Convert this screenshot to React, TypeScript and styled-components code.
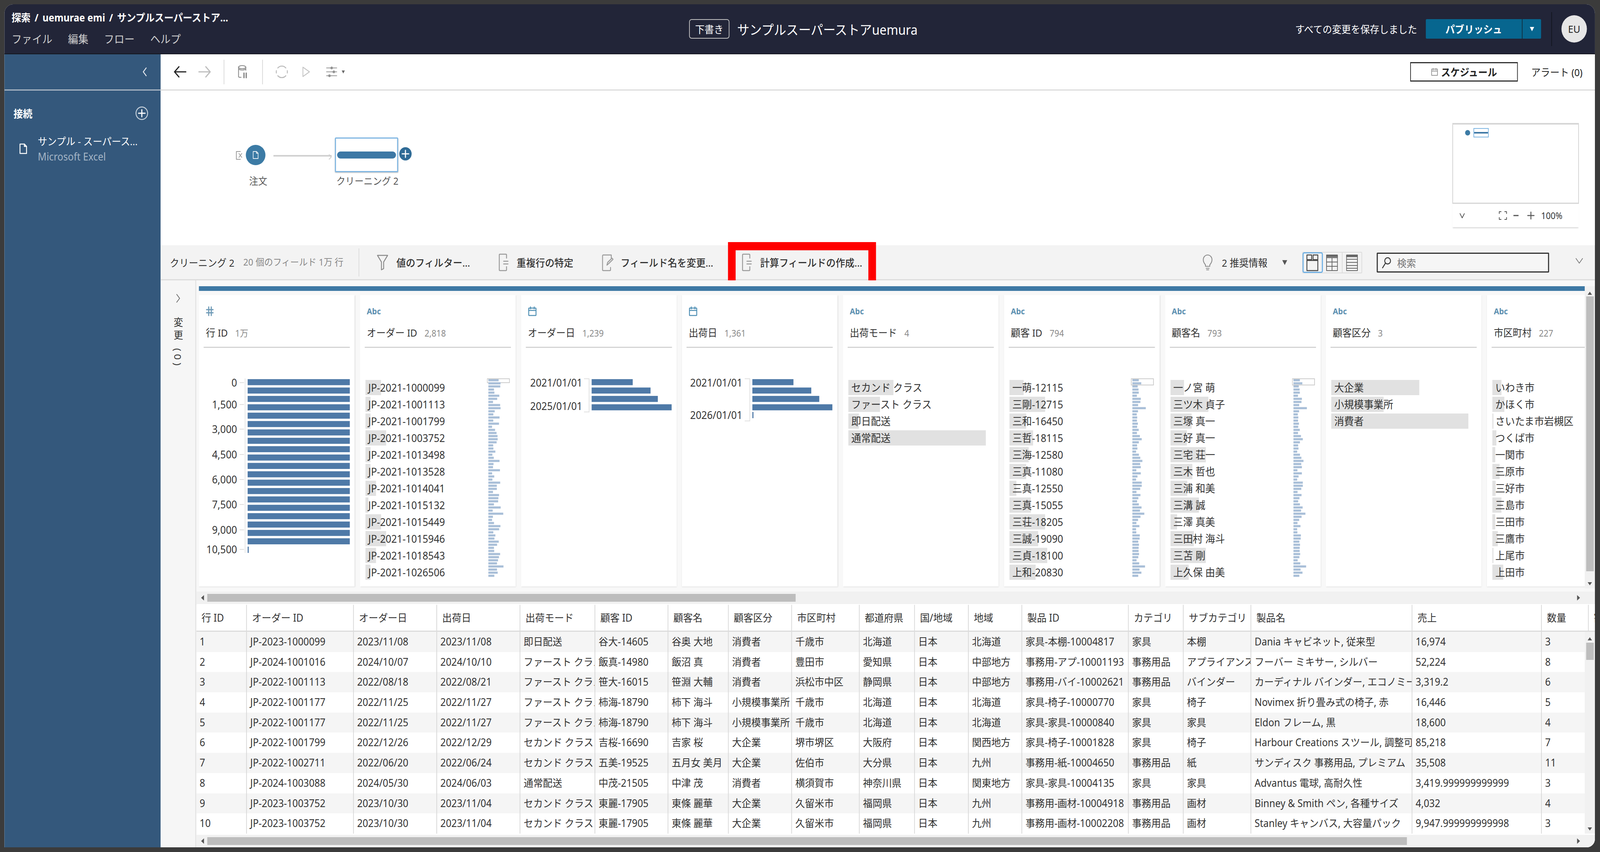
import React, { useState } from "react";
import styled, { createGlobalStyle } from "styled-components";

const Global = createGlobalStyle`
  html, body { margin: 0; padding: 0; width: 100%; height: 2182px; overflow: hidden; background: #3b3b3b; }
  #root { width: 100%; height: 100%; overflow: hidden; }
  * { box-sizing: border-box; }
  body { font-family: "Noto Sans", "Noto Sans CJK JP", sans-serif; color: #333; }
`;

/* The browser window can be narrower than the 4400px design, so the page is fitted to it. */
const Page = styled.div`
  width: 4400px; height: 2182px; padding: 11px 14px 12px 12px; background: #3b3b3b; transform-origin: 0 0;
`;
const Win = styled.div`
  width: 100%; height: 100%; display: flex; flex-direction: column; overflow: hidden;
  border-radius: 24px 24px 22px 0; background: #fff; position: relative;
`;

/* ---------- top bar ---------- */
const TopBar = styled.header`
  height: 128px; flex: none; display: flex; align-items: center; background: #222538;
  border-bottom: 2px solid #14161f; padding-right: 22px;
`;
const TopLeft = styled.div`
  width: 1883px; flex: none; padding-left: 20px; display: flex; flex-direction: column; gap: 23px; margin-top: -2px;
`;
const Crumbs = styled.div`
  display: flex; gap: 11px; font-size: 26px; line-height: 30px; font-weight: 700; color: #fff; white-space: nowrap;
`;
const Menu = styled.nav`
  display: flex; gap: 43px; font-size: 28px; line-height: 34px; color: #cfcfcf;
`;
const Draft = styled.span`
  width: 111px; height: 50px; display: flex; align-items: center; justify-content: center;
  border: 2px solid #c0c0c0; border-radius: 7px; color: #fff; font-size: 26px;
`;
const Title = styled.div`
  margin-left: 21px; font-size: 34px; color: #fff; white-space: nowrap;
`;
const TopRight = styled.div`
  margin-left: auto; display: flex; align-items: center; height: 100%;
`;
const Saved = styled.span`
  font-size: 26px; color: #fff; white-space: nowrap;
`;
const Publish = styled.div`
  margin-left: 24px; display: flex; height: 50px; width: 317px; background: #07668f; border-radius: 3px; color: #fff;
`;
const PublishLabel = styled.span`
  flex: 1; display: flex; align-items: center; justify-content: center; font-size: 26px; font-weight: 700;
`;
const PublishCaret = styled.span`
  width: 53px; display: flex; align-items: center; justify-content: center; border-left: 2px solid #13303f;
`;
const TopRule = styled.span`
  width: 2px; height: 87px; background: #14161f; margin: 0 26px 0 28px;
`;
const Avatar = styled.span`
  width: 70px; height: 70px; border-radius: 50%; background: #e6e6e6; color: #222; display: flex; align-items: center;
  justify-content: center; font-size: 26px;
`;

/* ---------- body ---------- */
const Body = styled.div`
  flex: 1; display: flex; min-height: 0;
`;
const Side = styled.aside`
  width: 430px; flex: none; background: #34587c; color: #fff; display: flex; flex-direction: column;
`;
const SideTop = styled.div`
  height: 93px; flex: none; display: flex; align-items: center; justify-content: flex-end; padding-right: 36px;
  border-bottom: 3px solid #a9b6c4;
`;
const SideHead = styled.div`
  display: flex; align-items: center; justify-content: space-between; padding: 0 34px 0 25px; height: 40px; margin-top: 38px;
  font-size: 26px; font-weight: 700;
`;
const SideItem = styled.div`
  display: flex; align-items: center; gap: 28px; padding-left: 40px; margin-top: 36px;
`;
const SideText = styled.div`
  display: flex; flex-direction: column; gap: 8px;
`;
const SideName = styled.span`
  font-size: 26px; line-height: 32px; white-space: nowrap;
`;
const SideSub = styled.span`
  font-size: 26.5px; line-height: 30px; color: #a5b6c7;
`;

const Main = styled.main`
  flex: 1; min-width: 0; display: flex; flex-direction: column; background: #fff;
`;
const Toolbar = styled.div`
  height: 93px; flex: none; display: flex; align-items: center; padding-left: 35px; padding-right: 34px;
  border-bottom: 3px solid #dcdcdc;
`;
const Tool = styled.span<{ $ml?: number }>`
  display: inline-flex; align-items: center; margin-left: ${(p) => p.$ml ?? 0}px;
`;
const ToolRule = styled.span<{ $ml: number }>`
  width: 2px; height: 63px; background: #d8d8d8; margin-left: ${(p) => p.$ml}px;
`;
const ScheduleBtn = styled.div`
  margin-left: auto; width: 296px; height: 50px; border: 2px solid #333; border-bottom-width: 3px; border-top-width: 3px;
  display: flex; align-items: center; justify-content: center; gap: 8px; font-size: 26px; font-weight: 700; color: #222;
`;
const Alert = styled.span`
  margin-left: 37px; font-size: 26px; color: #222; white-space: nowrap;
`;

const FlowArea = styled.section`
  height: 396px; flex: none; position: relative; background: #fff;
`;
const FlowNode = styled.div<{ $x: number; $y: number }>`
  position: absolute; left: ${(p) => p.$x}px; top: ${(p) => p.$y}px;
`;
const Circle = styled.div`
  width: 54px; height: 52px; border-radius: 50%; background: #3c7ba5; display: flex; align-items: center; justify-content: center;
`;
const StepCard = styled.div`
  width: 174px; height: 89px; border: 3px solid #7fb6e2; border-radius: 3px; background: #fff; display: flex; align-items: center; padding: 0 3px;
  box-shadow: 0 2px 2px #ccc;
`;
const StepBar = styled.div`
  height: 18px; flex: 1; background: #3d78a5; border-radius: 9px;
`;
const FlowLabel = styled.div`
  font-size: 25px; color: #555; white-space: nowrap;
`;
const Link = styled.div`
  width: 160px; height: 4px; background: #d0d0d0;
`;
const Minimap = styled.div`
  position: absolute; right: 44px; top: 83px; width: 348px; height: 267px; background: #fff; display: flex; flex-direction: column;
  box-shadow: 0 3px 3px -1px #ccc;
`;
const MapView = styled.div`
  height: 207px; flex: none; border: 2px solid #d6d6d6; border-top-width: 4px; border-bottom-width: 3px; padding: 9px 0 0 33px; display: flex; gap: 9px; align-items: flex-start;
`;
const MapDot = styled.span`
  width: 14px; height: 14px; border-radius: 50%; background: #3c7ba5; margin-top: 5px;
`;
const MapStep = styled.span`
  width: 42px; height: 24px; border: 2px solid #7fb6e2; display: flex; align-items: center;
`;
const MapBar = styled.span`
  flex: 1; height: 4px; background: #3d78a5;
`;
const MapCtl = styled.div`
  flex: 1; display: flex; align-items: center; padding: 0 12px 0 20px; color: #333; font-size: 23px;
`;

/* ---------- profile bar ---------- */
const ProfileBar = styled.div`
  height: 90px; flex: none; background: #f3f3f3; border-bottom: 3px solid #dcdcdc; display: flex; align-items: center; padding-left: 25px;
  position: relative;
`;
const StepName = styled.span`
  font-size: 26px; color: #333; white-space: nowrap; width: 202px; flex: none;
`;
const StepMeta = styled.span`
  font-size: 24px; color: #888; white-space: nowrap; width: 317px; flex: none; margin-top: -5px;
`;
const BarRule = styled.span`
  width: 2px; height: 72px; background: #dcdcdc; flex: none;
`;
const Action = styled.div<{ $ml: number; $gap: number }>`
  display: flex; align-items: center; gap: ${(p) => p.$gap}px; margin-left: ${(p) => p.$ml}px; flex: none;
  font-size: 26px; font-weight: 500; color: #333; white-space: nowrap;
`;
const RedBox = styled.div`
  position: absolute; left: 1560px; top: -8px; width: 407px; height: 121px; border: 21px solid #f00; pointer-events: none;
`;
const Hint = styled.div`
  position: absolute; left: 2865px; top: 0; height: 88px; display: flex; align-items: center; gap: 25px; font-size: 26px; color: #333;
`;
const Views = styled.div`
  position: absolute; left: 3139px; top: 17px; display: flex; height: 55px; border: 2px solid #dcdcdc; border-radius: 3px; width: 165px;
`;
const ViewBtn = styled.span<{ $on?: boolean }>`
  flex: 1; display: flex; align-items: center; justify-content: center;
  ${(p) => (p.$on ? "outline: 3px solid #6fb0e4; outline-offset: -2px; border-radius: 4px;" : "")}
  &:not(:last-child) { border-right: 2px solid #dcdcdc; }
`;
const Search = styled.div`
  position: absolute; left: 3344px; top: 19px; width: 474px; height: 51px; border: 3px solid #333; border-radius: 2px; background: #f6f6f6;
  display: flex; align-items: center; gap: 16px; padding-left: 11px; font-size: 26px; color: #777;
`;
const Collapse = styled.span`
  position: absolute; left: 3890px; top: 30px; display: flex;
`;

/* ---------- workspace ---------- */
const Workspace = styled.div`
  flex: 1; min-height: 0; display: flex;
`;
const Changes = styled.div`
  width: 98px; flex: none; background: #f6f6f6; border-right: 3px solid #e2e2e2; display: flex; flex-direction: column; align-items: center; padding-top: 34px;
`;
const ChangesText = styled.div`
  writing-mode: vertical-rl; font-size: 26px; color: #333; letter-spacing: 7px; margin-top: 36px; white-space: nowrap;
`;
const Content = styled.div`
  flex: 1; min-width: 0; display: flex; flex-direction: column;
`;
const Profile = styled.div`
  height: 829px; flex: none; background: #f8f8f8; position: relative; overflow: hidden; padding: 15px 0 0 7px;
`;
const ProgressBar = styled.div`
  width: 3834px; height: 12px; background: #3d78a4;
`;
const Cards = styled.div`
  display: flex; gap: 14.75px; margin-top: 11px; width: 3811px; overflow: hidden; padding-bottom: 4px;
`;
const Card = styled.article`
  width: 428px; height: 746px; flex: none; background: #fff; box-shadow: 1px 1px 3px #d8d8d8;
`;
const CardHead = styled.div`
  height: 135px; margin: 0 13px; border-bottom: 3px solid #d4d4d4; position: relative;
`;
const TypeSlot = styled.div`
  position: absolute; left: 6px; top: 28px; height: 26px; display: flex; align-items: center;
`;
const Abc = styled.span`
  font-size: 21px; font-weight: 700; color: #5b8fb0; line-height: 26px;
`;
const CardTitle = styled.div`
  position: absolute; left: 6px; top: 76px; display: flex; align-items: baseline; gap: 20px; white-space: nowrap;
`;
const FieldName = styled.span`
  font-size: 26px; color: #333;
`;
const FieldCount = styled.span`
  font-size: 23px; color: #8a8a8a;
`;
const ChartArea = styled.div`
  display: flex; justify-content: space-between; padding: 82px 15px 0 15px;
`;
const List = styled.ul`
  list-style: none; margin: 0; padding: 0; display: flex; flex-direction: column; gap: 4px; flex: 1;
`;
const ListRow = styled.li`
  height: 39px; padding-left: 8px; font-size: 27px; line-height: 39px; color: #333; white-space: nowrap;
  background-image: linear-gradient(#e1e1e1, #e1e1e1); background-repeat: no-repeat;
`;
const Mini = styled.svg`
  flex: none; margin-top: -4px;
`;
const HistSvg = styled.svg`
  display: block; font-size: 27px; fill: #333;
`;

const HScrollTrack = styled.div`
  position: absolute; left: 0; bottom: 0; right: 0; height: 32px; background: #f1f1f1; display: flex; align-items: center; padding-right: 41px;
`;
const ArrowL = styled.span`
  width: 0; height: 0; border: 7px solid transparent; border-left: 0; border-right: 8px solid #555; margin: 0 9px 0 13px;
`;
const ArrowR = styled.span`
  width: 0; height: 0; border: 7px solid transparent; border-right: 0; border-left: 8px solid #555; margin-left: auto;
`;
const Thumb = styled.span<{ $w: number }>`
  width: ${(p) => p.$w}px; height: 20px; background: #bdbdbd;
`;
const VScroll = styled.div<{ $top: number; $bottom: number }>`
  position: absolute; right: 0; top: ${(p) => p.$top}px; bottom: ${(p) => p.$bottom}px; width: 28px; background: #f1f1f1;
  display: flex; flex-direction: column; align-items: center; padding: 14px 0 8px;
`;
const ArrowU = styled.span`
  width: 0; height: 0; border: 6px solid transparent; border-top: 0; border-bottom: 8px solid #555;
`;
const ArrowD = styled.span`
  width: 0; height: 0; border: 6px solid transparent; border-bottom: 0; border-top: 8px solid #555; margin-top: auto;
`;
const VThumb = styled.span<{ $mt: number; $h: number }>`
  width: 21px; height: ${(p) => p.$h}px; background: #bdbdbd; margin-top: ${(p) => p.$mt}px;
`;

/* ---------- table ---------- */
const TableWrap = styled.div`
  flex: 1; min-height: 0; position: relative; overflow: hidden; background: #fff; margin-top: 2px;
`;
const COLS = [139, 294, 229, 229, 206, 201, 166, 174, 186, 152, 148, 147, 293, 151, 186, 443, 356, 129, 160];
const Row = styled.div<{ $alt?: boolean }>`
  display: grid; grid-template-columns: ${COLS.map((c) => c + "px").join(" ")}; height: 51.7px;
  background: ${(p) => (p.$alt ? "#f5f5f5" : "#fff")};
`;
const HeadRow = styled(Row)`
  height: 69px; border-bottom: 3px solid #dcdcdc; background: #fff;
`;
const HeadCell = styled.div`
  padding-left: 14px; line-height: 66px; font-size: 26.5px; color: #333; border-right: 2px solid #d8d8d8; white-space: nowrap; overflow: hidden;
`;
const Cell = styled.div`
  padding-left: 9px; line-height: 51px; font-size: 26.5px; color: #333; border-right: 2px solid #d8d8d8; white-space: nowrap; overflow: hidden;
`;

/* ---------- data ---------- */
const ID = ["JP-2021-1000099","JP-2021-1001113","JP-2021-1001799","JP-2021-1003752","JP-2021-1013498","JP-2021-1013528","JP-2021-1014041","JP-2021-1015132","JP-2021-1015449","JP-2021-1015946","JP-2021-1018543","JP-2021-1026506"];
const IDW = [43,14,14,57,14,14,29,8,43,57,29,14];
const CID = ["一萌-12115","三剛-12715","三和-16450","三哲-18115","三海-12580","三真-11080","三真-12550","三真-15055","三荘-18205","三誠-19090","三貞-18100","上和-20830"];
const CIDW = [39,98,46,65,53,46,19,59,98,79,104,72];
const NAME = ["一ノ宮 萌","三ツ木 貞子","三塚 真一","三好 真一","三宅 荘一","三木 哲也","三浦 和美","三溝 誠","三澤 真美","三田村 海斗","三苫 剛","上久保 由美"];
const NAMEW = [37,104,58,45,97,60,46,78,18,64,97,50];
const CITY = ["いわき市","かほく市","さいたま市岩槻区","つくば市","一関市","三原市","三好市","三島市","三田市","三鷹市","上尾市","上田市"];
const CITYW = [25,33,3,11,8,20,9,25,8,15,3,30];

const HEAD = ["行 ID","オーダー ID","オーダー日","出荷日","出荷モード","顧客 ID","顧客名","顧客区分","市区町村","都道府県","国/地域","地域","製品 ID","カテゴリ","サブカテゴリ","製品名","売上","数量","割引"];
const DATA: string[][] = [
  ["1","JP-2023-1000099","2023/11/08","2023/11/08","即日配送","谷大-14605","谷奥 大地","消費者","千歳市","北海道","日本","北海道","家具-本棚-10004817","家具","本棚","Dania キャビネット, 従来型","16,974","3",""],
  ["2","JP-2024-1001016","2024/10/07","2024/10/10","ファースト クラス","飯真-14980","飯沼 真","消費者","豊田市","愛知県","日本","中部地方","事務用-アプ-10001193","事務用品","アプライアンス","フーバー ミキサー, シルバー","52,224","8",""],
  ["3","JP-2022-1001113","2022/08/18","2022/08/21","ファースト クラス","笹大-16015","笹淵 大輔","消費者","浜松市中区","静岡県","日本","中部地方","事務用-バイ-10002621","事務用品","バインダー","カーディナル バインダー, エコノミー","3,319.2","6",""],
  ["4","JP-2022-1001177","2022/11/25","2022/11/27","ファースト クラス","柿海-18790","柿下 海斗","小規模事業所","千歳市","北海道","日本","北海道","家具-椅子-10000770","家具","椅子","Novimex 折り畳み式の椅子, 赤","16,446","5",""],
  ["5","JP-2022-1001177","2022/11/25","2022/11/27","ファースト クラス","柿海-18790","柿下 海斗","小規模事業所","千歳市","北海道","日本","北海道","家具-家具-10000840","家具","家具","Eldon フレーム, 黒","18,600","4",""],
  ["6","JP-2022-1001799","2022/12/26","2022/12/29","セカンド クラス","吉桜-16690","吉家 桜","大企業","堺市堺区","大阪府","日本","関西地方","家具-椅子-10001828","家具","椅子","Harbour Creations スツール, 調整可能","85,218","7",""],
  ["7","JP-2022-1002711","2022/06/20","2022/06/24","セカンド クラス","五美-19525","五月女 美月","大企業","佐伯市","大分県","日本","九州","事務用-紙-10004650","事務用品","紙","サンディスク 事務用品, プレミアム","35,508","11",""],
  ["8","JP-2024-1003088","2024/05/30","2024/06/03","通常配送","中茂-21505","中津 茂","消費者","横須賀市","神奈川県","日本","関東地方","家具-家具-10004135","家具","家具","Advantus 電球, 高耐久性","3,419.999999999999","3",""],
  ["9","JP-2023-1003752","2023/10/30","2023/11/04","セカンド クラス","東麗-17905","東條 麗華","大企業","久留米市","福岡県","日本","九州","事務用-画材-10004918","事務用品","画材","Binney & Smith ペン, 各種サイズ","4,032","4",""],
  ["10","JP-2023-1003752","2023/10/30","2023/11/04","セカンド クラス","東麗-17905","東條 麗華","大企業","久留米市","福岡県","日本","九州","事務用-画材-10002208","事務用品","画材","Stanley キャンバス, 大容量パック","9,947.999999999998","3",""],
];

/* ---------- icons ---------- */
const Ic = ({ w, h, vb, children, stroke = "#999", sw = 2.5, fill = "none" }: any) => (
  <svg width={w} height={h} viewBox={vb || `0 0 ${w} ${h}`} fill={fill} stroke={stroke} strokeWidth={sw} strokeLinecap="round" strokeLinejoin="round">{children}</svg>
);
const DocIcon = ({ w = 24, h = 28, stroke = "#fff", sw = 2.5 }: any) => (
  <Ic w={w} h={h} vb="0 0 24 28" stroke={stroke} sw={sw}><path d="M3 2h12l6 6v18H3z" /><path d="M15 2v6h6" /></Ic>
);
const FieldDoc = () => (
  <Ic w={28} h={46} vb="0 0 28 46" stroke="#999" sw={2.5}>
    <path d="M22 12V4a2 2 0 0 0-2-2H4a2 2 0 0 0-2 2v38a2 2 0 0 0 2 2h16a2 2 0 0 0 2-2v-8" /><path d="M14 20h12M14 27h12" />
  </Ic>
);
const Calendar = () => (
  <Ic w={24} h={26} stroke="#4f8fb4" sw={2.5}><rect x="2" y="5" width="20" height="19" rx="1" /><path d="M2 11h20M7 2v5M17 2v5" /></Ic>
);
const Hash = () => (
  <Ic w={22} h={26} stroke="#6d99b6" sw={3}><path d="M8 2v22M15 2v22M2 9h18M2 17h18" /></Ic>
);
const Caret = ({ c = "#fff", s = 7 }: any) => (
  <svg width={s * 2} height={s * 2} viewBox="0 0 14 14" fill={c}><path d="M1 2h12L7 13z" /></svg>
);

const rand = (seed: number) => {
  let x = seed * 9301 + 49297;
  return (i: number) => {
    x = (x * 1103515245 + 12345 + i) & 0x7fffffff;
    return (x >> 8) % 1000 / 1000;
  };
};
const MiniHist = ({ seed, boxH, base, span }: { seed: number; boxH: number; base: number; span: number }) => {
  const r = rand(seed);
  const bars = Array.from({ length: 64 }, (_, i) => base + r(i) * span + (i % 17 === 9 ? 16 : 0));
  return (
    <Mini width="64" height="512" viewBox="0 0 64 512">
      <rect x="1" y="1" width="61" height={boxH} fill="#fff" stroke="#ccc" strokeWidth="2" />
      {bars.map((w, i) => (
        <rect key={i} x="4" y={2 + i * 7.95} width={w} height="5.5" fill="#a9bfd8" />
      ))}
    </Mini>
  );
};

const BARC = "#4e79a7";
const barY = (i: number) => 80 + i * 21.45;
const IdHist = () => {
  const labels: [string, number][] = [["0", 89], ["1,500", 145], ["3,000", 208], ["4,500", 273], ["6,000", 337], ["7,500", 401], ["9,000", 466], ["10,500", 516]];
  return (
    <HistSvg width="428" height="560" viewBox="0 0 428 560">
      <path d="M127 78V525" stroke="#e4e4e4" strokeWidth="2" />
      {labels.map(([t, y]) => (
        <g key={t}>
          <text x="105" y={y + 10} textAnchor="end">{t}</text>
          <path d={`M112 ${y}H124`} stroke="#ddd" strokeWidth="2" />
        </g>
      ))}
      {Array.from({ length: 20 }, (_, i) => (
        <rect key={i} x="134" y={barY(i)} width="281" height="15.5" fill={BARC} />
      ))}
      <rect x="134" y="509" width="3" height="16" fill={BARC} />
    </HistSvg>
  );
};
const DateHist = ({ labels, widths, x, ax, axEnd, tail }: { labels: [string, number][]; widths: number[]; x: number; ax: number; axEnd: number; tail?: boolean }) => (
  <HistSvg width="428" height="560" viewBox="0 0 428 560">
    <path d={`M${ax - 14} 79H${ax}V${axEnd}H${ax - 14}`} stroke="#e0e0e0" strokeWidth="2" fill="none" />
    {labels.map(([t, y]) => (
      <text key={t} x={x} y={y + 10}>{t}</text>
    ))}
    {widths.map((w, i) => (
      <rect key={i} x={ax + 7} y={barY(i)} width={w} height="15.5" fill={BARC} />
    ))}
    {tail && <rect x={ax + 7} y="164" width="3" height="16" fill={BARC} />}
  </HistSvg>
);

type Col = { kind: "id" | "date" | "abc"; name: string; count: string; body: React.ReactNode };
const rows = (items: string[], widths: number[]) => (
  <List>
    {items.map((t, i) => (
      <ListRow key={t} style={{ backgroundSize: `${widths[i]}px 100%` }}>{t}</ListRow>
    ))}
  </List>
);
const area = (items: string[], widths: number[], mini?: React.ReactNode) => (
  <ChartArea>{rows(items, widths)}{mini}</ChartArea>
);
const COLUMNS: Col[] = [
  { kind: "id", name: "行 ID", count: "1万", body: <IdHist /> },
  { kind: "abc", name: "オーダー ID", count: "2,818", body: area(ID, IDW, <MiniHist seed={3} boxH={10} base={10} span={24} />) },
  { kind: "date", name: "オーダー日", count: "1,239", body: <DateHist labels={[["2021/01/01", 89], ["2025/01/01", 149]]} widths={[113, 162, 182, 220]} x={25} ax={187} axEnd={164} /> },
  { kind: "date", name: "出荷日", count: "1,361", body: <DateHist labels={[["2021/01/01", 89], ["2026/01/01", 172]]} widths={[113, 162, 184, 220]} x={23} ax={187} axEnd={187} tail /> },
  { kind: "abc", name: "出荷モード", count: "4", body: area(["セカンド クラス", "ファースト クラス", "即日配送", "通常配送"], [124, 87, 29, 378]) },
  { kind: "abc", name: "顧客 ID", count: "794", body: area(CID, CIDW, <MiniHist seed={7} boxH={16} base={10} span={16} />) },
  { kind: "abc", name: "顧客名", count: "793", body: area(NAME, NAMEW, <MiniHist seed={7} boxH={16} base={10} span={16} />) },
  { kind: "abc", name: "顧客区分", count: "3", body: area(["大企業", "小規模事業所", "消費者"], [242, 144, 377]) },
  { kind: "abc", name: "市区町村", count: "227", body: area(CITY, CITYW) },
];

export default function App() {
  const [fit] = useState(() => Math.min(1, window.innerWidth / 4400));
  return (
    <Page style={{ transform: `scaleX(${fit})` }}>
      <Global />
      <Win>
        <TopBar>
          <TopLeft>
            <Crumbs><span>探索</span><span>/</span><span>uemurae emi</span><span>/</span><span>サンプルスーパーストア...</span></Crumbs>
            <Menu><span>ファイル</span><span>編集</span><span>フロー</span><span>ヘルプ</span></Menu>
          </TopLeft>
          <Draft>下書き</Draft>
          <Title>サンプルスーパーストアuemura</Title>
          <TopRight>
            <Saved>すべての変更を保存しました</Saved>
            <Publish>
              <PublishLabel>パブリッシュ</PublishLabel>
              <PublishCaret><Caret /></PublishCaret>
            </Publish>
            <TopRule />
            <Avatar>EU</Avatar>
          </TopRight>
        </TopBar>
        <Body>
          <Side>
            <SideTop>
              <Ic w={16} h={26} stroke="#e4e8ee" sw={2.5}><path d="M12 3 4 13l8 10" /></Ic>
            </SideTop>
            <SideHead>
              <span>接続</span>
              <Ic w={36} h={36} stroke="#c5d0db" sw={2.5}><circle cx="18" cy="18" r="16" /><path d="M18 9v18M9 18h18" stroke="#fff" strokeWidth={3} /></Ic>
            </SideHead>
            <SideItem>
              <DocIcon />
              <SideText>
                <SideName>サンプル - スーパース...</SideName>
                <SideSub>Microsoft Excel</SideSub>
              </SideText>
            </SideItem>
          </Side>
          <Main>
            <Toolbar>
              <Tool><Ic w={36} h={30} stroke="#222" sw={3.2}><path d="M34 15H3M15 2 3 15l12 13" /></Ic></Tool>
              <Tool $ml={32}><Ic w={36} h={30} stroke="#bdbdbd" sw={3.2}><path d="M2 15h31M21 2l12 13-12 13" /></Ic></Tool>
              <ToolRule $ml={34} />
              <Tool $ml={36}>
                <Ic w={28} h={36} stroke="#888" sw={2.2}><ellipse cx="13" cy="6" rx="10" ry="4" /><path d="M3 6v24q0 2 4 2h3M23 6v8M3 11q10 5 20 0" /><path d="M18 21v12M24 21v12" stroke="#777" strokeWidth={3} /></Ic>
              </Tool>
              <ToolRule $ml={40} />
              <Tool $ml={34}>
                <Ic w={36} h={36} stroke="#bcbcbc" sw={2.6}><path d="M7 8A15 15 0 0 1 29 8M29 28A15 15 0 0 1 7 28M3 15a15 15 0 0 0 0 6M33 15a15 15 0 0 1 0 6" /></Ic>
              </Tool>
              <Tool $ml={38}><Ic w={22} h={28} stroke="#c4c4c4" sw={2.2}><path d="M2 2l18 12L2 26z" /></Ic></Tool>
              <Tool $ml={43}>
                <Ic w={32} h={30} stroke="#999" sw={2.2}><path d="M2 5h28M2 15h28M2 25h28" /><circle cx="16" cy="5" r="2.5" fill="#888" /><circle cx="22" cy="15" r="2.5" fill="#888" /><circle cx="10" cy="25" r="2.5" fill="#888" /></Ic>
              </Tool>
              <Tool $ml={11}><Caret c="#666" s={5} /></Tool>
              <ScheduleBtn>
                <Ic w={20} h={22} stroke="#999" sw={2}><rect x="2" y="4" width="16" height="16" /><path d="M2 9h16M6 2v4M14 2v4" /></Ic>
                <span>スケジュール</span>
              </ScheduleBtn>
              <Alert>アラート (0)</Alert>
            </Toolbar>
            <FlowArea>
              <FlowNode $x={205} $y={153}><Ic w={22} h={26} stroke="#999" sw={2}><path d="M14 3H3v20h11" /><path d="M10 8l8 10M18 8l-8 10" stroke="#999" /></Ic></FlowNode>
              <FlowNode $x={234} $y={139}><Circle><DocIcon w={18} h={24} stroke="#e8f0f6" sw={2.4} /></Circle></FlowNode>
              <FlowNode $x={310} $y={165}><Link /></FlowNode>
              <FlowNode $x={462} $y={160}><Ic w={8} h={14} stroke="#ccc" sw={2}><path d="M1 1l6 6-6 6" /></Ic></FlowNode>
              <FlowNode $x={479} $y={120}><StepCard><StepBar /></StepCard></FlowNode>
              <FlowNode $x={655} $y={144}><Ic w={36} h={36} stroke="none"><circle cx="18" cy="18" r="17" fill="#2f6b96" /><path d="M18 9v18M9 18h18" stroke="#fff" strokeWidth="3" /></Ic></FlowNode>
              <FlowNode $x={243} $y={212}><FlowLabel>注文</FlowLabel></FlowNode>
              <FlowNode $x={483} $y={212}><FlowLabel>クリーニング 2</FlowLabel></FlowNode>
              <Minimap>
                <MapView><MapDot /><MapStep><MapBar /></MapStep></MapView>
                <MapCtl>
                  <Ic w={14} h={22} stroke="#555" sw={2}><path d="M1 6l6 11 6-11" /></Ic>
                  <Tool $ml={92}><Ic w={26} h={26} stroke="#555" sw={2}><path d="M8 3H3v5M18 3h5v5M8 23H3v-5M18 23h5v-5" /></Ic></Tool>
                  <Tool $ml={16}><Ic w={14} h={4} stroke="#555" sw={3}><path d="M0 2h14" /></Ic></Tool>
                  <Tool $ml={24}><Ic w={20} h={20} stroke="#555" sw={2.5}><path d="M10 1v18M1 10h18" /></Ic></Tool>
                  <Tool $ml={18}>100%</Tool>
                </MapCtl>
              </Minimap>
            </FlowArea>
            <ProfileBar>
              <StepName>クリーニング 2</StepName>
              <StepMeta>20 個のフィールド 1万 行</StepMeta>
              <BarRule />
              <Action $ml={48} $gap={22}>
                <Ic w={32} h={42} stroke="#888" sw={2.4}><path d="M2 3h28L19 20v17l-6 3V20z" /></Ic>
                <span>値のフィルター...</span>
              </Action>
              <Action $ml={78} $gap={22}><FieldDoc /><span>重複行の特定</span></Action>
              <Action $ml={78} $gap={20}>
                <Ic w={32} h={46} stroke="#999" sw={2.4}><path d="M26 12V4H4a2 2 0 0 0-2 2v36a2 2 0 0 0 2 2h18a2 2 0 0 0 2-2v-6" /><path d="M14 30l2-7 12-11 3 3-12 11z" /></Ic>
                <span>フィールド名を変更...</span>
              </Action>
              <Action $ml={79} $gap={22}><FieldDoc /><span>計算フィールドの作成...</span></Action>
              <RedBox />
              <Hint>
                <Ic w={28} h={44} stroke="#888" sw={2.2}><path d="M8 28C4 24 2 20 2 15a12 12 0 0 1 24 0c0 5-2 9-6 13v4H8z" /><path d="M10 37h8M11 41h6" /></Ic>
                <span>2 推奨情報</span>
                <Tool $ml={14}><Caret c="#555" s={8} /></Tool>
              </Hint>
              <Views>
                <ViewBtn $on><Ic w={34} h={44} stroke="#444" sw={2.4}><rect x="2" y="16" width="30" height="26" /><rect x="2" y="2" width="13" height="12" /><rect x="19" y="2" width="13" height="12" /></Ic></ViewBtn>
                <ViewBtn><Ic w={32} h={42} stroke="#666" sw={2}><rect x="1" y="1" width="30" height="40" /><path d="M1 8h30M1 19h30M1 30h30M16 8v33" /><path d="M1 4h30" strokeWidth="5" /></Ic></ViewBtn>
                <ViewBtn><Ic w={32} h={42} stroke="#666" sw={2}><rect x="1" y="1" width="30" height="40" /><path d="M1 12h30M1 20h30M1 28h30M1 35h30" /><path d="M1 4h30" strokeWidth="5" /></Ic></ViewBtn>
              </Views>
              <Search>
                <Ic w={26} h={30} stroke="#333" sw={2.4}><circle cx="16" cy="10" r="8" /><path d="M10 16 2 28" /></Ic>
                <span>検索</span>
              </Search>
              <Collapse><Ic w={22} h={20} stroke="#777" sw={2}><path d="M2 4l9 12 9-12" /></Ic></Collapse>
            </ProfileBar>
            <Workspace>
              <Changes>
                <Ic w={12} h={24} stroke="#666" sw={2}><path d="M2 2l8 10-8 10" /></Ic>
                <ChangesText>変更 (0)</ChangesText>
              </Changes>
              <Content>
                <Profile>
                  <ProgressBar />
                  <Cards>
                    {COLUMNS.map((c) => (
                      <Card key={c.name}>
                        <CardHead>
                          <TypeSlot>
                            {c.kind === "id" ? <Hash /> : c.kind === "date" ? <Calendar /> : <Abc>Abc</Abc>}
                          </TypeSlot>
                          <CardTitle><FieldName>{c.name}</FieldName><FieldCount>{c.count}</FieldCount></CardTitle>
                        </CardHead>
                        {c.body}
                      </Card>
                    ))}
                  </Cards>
                  <VScroll $top={15} $bottom={40}>
                    <ArrowU />
                    <VThumb $mt={4} $h={704} />
                    <ArrowD />
                  </VScroll>
                  <HScrollTrack>
                    <ArrowL />
                    <Thumb $w={1618} />
                    <ArrowR />
                  </HScrollTrack>
                </Profile>
                <TableWrap>
                  <HeadRow>{HEAD.map((h) => <HeadCell key={h}>{h}</HeadCell>)}</HeadRow>
                  {DATA.map((r, i) => (
                    <Row key={i} $alt={i % 2 === 0}>
                      {r.map((c, j) => <Cell key={j}>{c}</Cell>)}
                    </Row>
                  ))}
                  <VScroll $top={69} $bottom={35}>
                    <ArrowU />
                    <VThumb $mt={6} $h={44} />
                    <ArrowD />
                  </VScroll>
                  <HScrollTrack>
                    <ArrowL />
                    <Thumb $w={3299} />
                    <ArrowR />
                  </HScrollTrack>
                </TableWrap>
              </Content>
            </Workspace>
          </Main>
        </Body>
      </Win>
    </Page>
  );
}
